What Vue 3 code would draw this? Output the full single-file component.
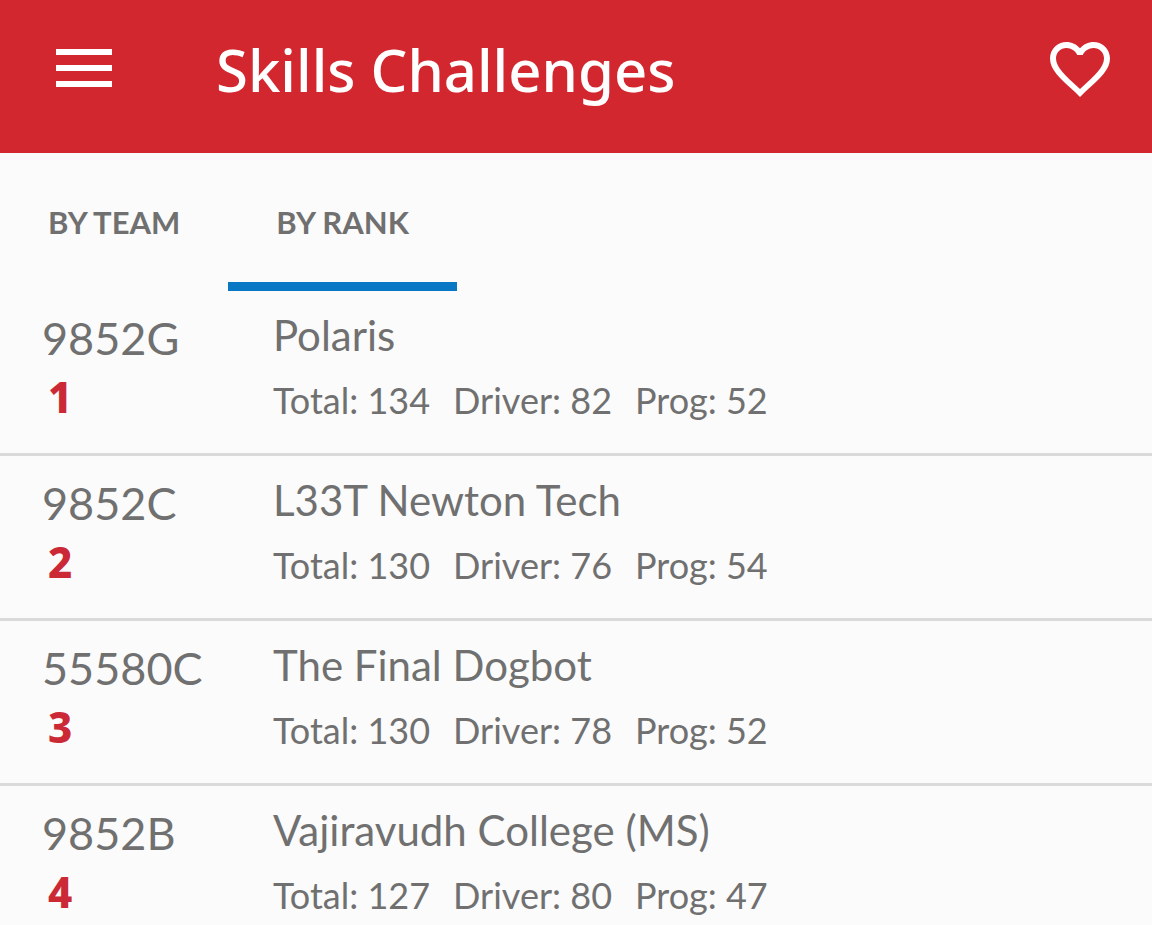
<script setup>
const teams = [
  { number: '9852G', rank: 1, name: 'Polaris', total: 134, driver: 82, prog: 52 },
  { number: '9852C', rank: 2, name: 'L33T Newton Tech', total: 130, driver: 76, prog: 54 },
  { number: '55580C', rank: 3, name: 'The Final Dogbot', total: 130, driver: 78, prog: 52 },
  { number: '9852B', rank: 4, name: 'Vajiravudh College (MS)', total: 127, driver: 80, prog: 47 },
]
</script>

<template>
  <div class="screen">
    <header class="bar">
      <button class="icon-button" type="button" aria-label="Menu">
        <svg class="menu" viewBox="0 0 56 40" aria-hidden="true">
          <path d="M0 3H56M0 19H56M0 35H56" stroke="currentColor" stroke-width="6" />
        </svg>
      </button>
      <h1 class="title">Skills Challenges</h1>
      <button class="icon-button" type="button" aria-label="Favorite">
        <svg class="heart" viewBox="0 0 60 54" aria-hidden="true">
          <path fill="currentColor" d="M43.5 0C38.3 0 33.3 2.4 30 6.3C26.7 2.4 21.7 0 16.5 0C7.3 0 0 7.3 0 16.5C0 27.5 9.5 36 25 50L30 55L35 50C50.5 36 60 27.5 60 16.5C60 7.3 52.7 0 43.5 0ZM30.3 46.7L30 47L29.7 46.7C15.4 33.7 6 25.2 6 16.5C6 10.5 10.5 6 16.5 6C21.1 6 25.6 9 27.2 13.1H32.8C34.4 9 38.9 6 43.5 6C49.5 6 54 10.5 54 16.5C54 25.2 44.6 33.7 30.3 46.7Z" />
        </svg>
      </button>
    </header>
    <nav class="tabs">
      <button class="tab" type="button">BY TEAM</button>
      <button class="tab active" type="button" aria-current="page">BY RANK</button>
    </nav>
    <main>
      <ol class="list">
        <li v-for="team in teams" :key="team.number" class="row">
          <div class="id">
            <span class="number">{{ team.number }}</span>
            <span class="rank">{{ team.rank }}</span>
          </div>
          <div class="info">
            <span class="name">{{ team.name }}</span>
            <span class="scores">
              <span>Total: {{ team.total }}</span>
              <span>Driver: {{ team.driver }}</span>
              <span>Prog: {{ team.prog }}</span>
            </span>
          </div>
        </li>
      </ol>
    </main>
  </div>
</template>

<style>
body {
  background: #fbfbfb;
}
</style>

<style scoped>
.screen {
  height: 100vh;
  overflow: hidden;
  background: #fbfbfb;
  color: #707070;
  font-family: Lato, "Open Sans", sans-serif;
}
.bar {
  display: flex;
  align-items: center;
  box-sizing: border-box;
  height: 153px;
  padding: 0 42px 16px 56px;
  background: #d32730;
  color: #fff;
}
.icon-button {
  display: flex;
  padding: 0;
  border: 0;
  background: none;
  color: inherit;
}
.menu {
  width: 56px;
  height: 40px;
}
.heart {
  width: 60px;
  height: 54px;
  overflow: visible;
}
.title {
  flex: 1;
  margin: 0 0 0 104px;
  padding-top: 2px;
  font-family: "Noto Sans", sans-serif;
  font-size: 58px;
  font-weight: 500;
  line-height: 80px;
}
.tabs {
  display: flex;
  height: 138px;
}
.tab {
  padding: 8px 48px 0;
  border: 0;
  border-bottom: 9px solid transparent;
  background: none;
  color: #707070;
  font-family: Lato, sans-serif;
  font-size: 31px;
  font-weight: 700;
}
.tab.active {
  border-color: #0878c4;
}
.list {
  margin: 0;
  padding: 0;
  list-style: none;
}
.row {
  display: flex;
  box-sizing: border-box;
  height: 165px;
  padding: 16px 0 0 42px;
  border-bottom: 3px solid #dadada;
}
.id,
.info {
  display: flex;
  flex-direction: column;
}
.id {
  width: 231px;
}
.number {
  font-size: 45px;
  line-height: 62px;
}
.rank {
  padding-left: 6px;
  color: #cc2936;
  font-family: "Noto Sans", sans-serif;
  font-size: 42px;
  font-weight: 800;
  line-height: 56px;
}
.name {
  font-size: 42px;
  line-height: 56px;
}
.scores {
  display: flex;
  gap: 23px;
  font-size: 36px;
  line-height: 74px;
}
</style>
